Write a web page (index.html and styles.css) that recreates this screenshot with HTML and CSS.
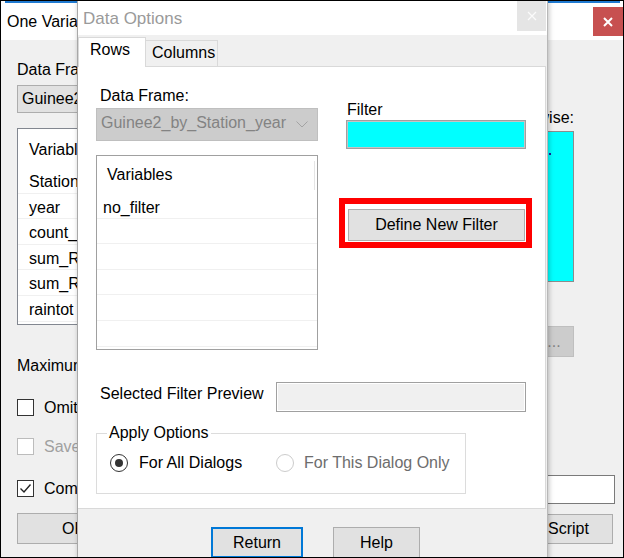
FILE: index.html
```html
<!DOCTYPE html>
<html>
<head>
<meta charset="utf-8">
<title>Data Options</title>
<link rel="stylesheet" href="styles.css">
</head>
<body>
<div class="screen">
  <div class="bgwin">
    <div class="bg-title">
      <span class="bg-title-text">One Varia</span>
      <span class="bg-close"><svg width="10" height="10" viewBox="0 0 10 10"><path d="M1 1L9 9M9 1L1 9" stroke="#fff" stroke-width="2"/></svg></span>
    </div>
    <div class="bg-client">
      <div class="bg-left">
        <div class="lbl first">Data Fra</div>
        <div class="bg-combo">Guinee2</div>
        <div class="bg-list">
          <div class="list-head">Variabl</div>
          <div class="row">Station</div>
          <div class="row">year</div>
          <div class="row">count_</div>
          <div class="row">sum_R</div>
          <div class="row">sum_R</div>
          <div class="row">raintot</div>
        </div>
        <div class="lbl max-lbl">Maximum</div>
        <div class="chk-row omit"><span class="chk"></span><span>Omit</span></div>
        <div class="chk-row save disabled"><span class="chk dis"></span><span>Save</span></div>
        <div class="chk-row comm"><span class="chk"><svg width="15" height="15" viewBox="0 0 15 15"><path d="M2.5 7.5L6 11L12.5 3.5" fill="none" stroke="#222" stroke-width="1.4"/></svg></span><span>Comm</span></div>
        <div class="btn bg-ok">OK</div>
      </div>
      <div class="bg-right">
        <div class="rlbl"><span>wise:</span></div>
        <div class="cyan-list"><span class="dot"></span></div>
        <div class="btn dis-btn">...</div>
        <div class="textbox"></div>
        <div class="btn script-btn">Script</div>
      </div>
    </div>
  </div>

  <div class="dlg">
    <div class="dlg-title">
      <span class="dlg-title-text">Data Options</span>
      <span class="dlg-close"><svg width="10" height="10" viewBox="0 0 10 10"><path d="M1 1L9 9M9 1L1 9" stroke="#fbfbfb" stroke-width="1.3"/></svg></span>
    </div>
    <div class="tabs">
      <div class="tab sel">Rows</div>
      <div class="tab">Columns</div>
    </div>
    <div class="page">
      <div class="page-top">
        <div class="pcol-left">
          <div class="df-lbl">Data Frame:</div>
          <div class="combo-dis">
            <span>Guinee2_by_Station_year</span>
            <svg width="12" height="7" viewBox="0 0 12 7"><path d="M0.5 0.5L6 6L11.5 0.5" fill="none" stroke="#a3a3a3" stroke-width="1"/></svg>
          </div>
          <div class="dlg-list">
            <div class="dlist-head">Variables</div>
            <div class="drow">no_filter</div>
            <div class="drow"></div>
            <div class="drow"></div>
            <div class="drow"></div>
            <div class="drow"></div>
            <div class="drow"></div>
          </div>
        </div>
        <div class="pcol-right">
          <div class="filter-lbl">Filter</div>
          <div class="filter-box"></div>
          <div class="redbox">
            <div class="btn dnf-btn">Define New Filter</div>
          </div>
        </div>
      </div>
      <div class="preview-row">
        <span class="preview-lbl">Selected Filter Preview</span>
        <div class="preview-box"></div>
      </div>
      <fieldset class="apply">
        <legend>Apply Options</legend>
        <div class="radio-row">
          <label class="ropt first"><span class="radio on"></span><span>For All Dialogs</span></label>
          <label class="ropt dis"><span class="radio off"></span><span>For This Dialog Only</span></label>
        </div>
      </fieldset>
    </div>
    <div class="footer">
      <div class="btn ret">Return</div>
      <div class="btn help">Help</div>
    </div>
  </div>
</div>
</body>
</html>
```

FILE: styles.css
```css
* { box-sizing: border-box; }
html, body { margin: 0; padding: 0; }
body {
  font-family: "Liberation Sans", Arial, sans-serif;
  font-size: 16px;
  line-height: 20px;
  color: #000;
  background: #fff;
}
.screen {
  position: relative;
  width: 624px;
  height: 558px;
  border: 1px solid #000;
  overflow: hidden;
  background: #f0f0f0;
}

/* ---------- background window (partly hidden behind the dialog) ---------- */
.bgwin {
  position: absolute;
  left: 0;
  top: 0;
  width: 622px;
  height: 556px;
  display: flex;
  flex-direction: column;
  background: #f0f0f0;
}
.bg-title {
  position: relative;
  height: 39px;
  flex: none;
  background: #fff;
  display: flex;
  align-items: flex-start;
  padding-left: 6px;
}
.bg-title::before {
  content: "";
  position: absolute;
  left: 4px;
  right: 3px;
  top: 0;
  height: 2px;
  background: #1f7ad1;
}
.bg-title-text {
  margin-top: 11px;
  width: 70px;
  overflow: hidden;
  white-space: nowrap;
}
.bg-close {
  margin-left: auto;
  margin-top: 6px;
  width: 30px;
  height: 29px;
  background: #c75050;
  display: flex;
  align-items: center;
  justify-content: center;
}
.bg-client {
  flex: 1;
  display: flex;
  justify-content: space-between;
}
.bg-left {
  width: 76px;
  padding-left: 16px;
  overflow: hidden;
}
.lbl { white-space: nowrap; }
.lbl.first { margin-top: 20px; }
.bg-combo {
  margin-top: 5px;
  width: 200px;
  height: 28px;
  background: #e1e1e1;
  border: 1px solid #adadad;
  padding-left: 4px;
  line-height: 26px;
  white-space: nowrap;
  overflow: hidden;
}
.bg-list {
  margin-top: 15px;
  width: 200px;
  height: 197px;
  background: #fff;
  border: 1px solid #828790;
  overflow: hidden;
}
.list-head { height: 39px; padding: 11px 0 0 11px; }
.bg-list .row {
  height: 25.6px;
  padding: 4px 0 0 11px;
  border-bottom: 1px solid #f0f0f0;
  white-space: nowrap;
}
.max-lbl { margin-top: 31px; }
.chk-row {
  display: flex;
  align-items: center;
  gap: 10px;
  height: 17px;
  line-height: 17px;
  white-space: nowrap;
}
.chk {
  width: 17px;
  height: 17px;
  flex: none;
  background: #fff;
  border: 1px solid #333;
  display: flex;
  align-items: center;
  justify-content: center;
}
.chk.dis { border-color: #bcbcbc; }
.chk-row.disabled { color: #a0a0a0; }
.omit { margin-top: 23px; }
.save { margin-top: 22px; }
.comm { margin-top: 25px; }
.btn {
  background: #e1e1e1;
  border: 1px solid #adadad;
  display: flex;
  align-items: center;
  justify-content: center;
  white-space: nowrap;
  flex: none;
}
.bg-ok {
  margin-top: 16px;
  width: 113px;
  height: 31px;
  justify-content: flex-start;
  padding-left: 44px;
}

.bg-right {
  width: 68px;
  margin-right: 8px;
  overflow: hidden;
}
.rlbl {
  margin-top: 68px;
  margin-left: -72px;
  width: 99px;
  display: flex;
  justify-content: flex-end;
  white-space: nowrap;
}
.rlbl span { flex: none; }
.cyan-list {
  margin-top: 3px;
  margin-left: -72px;
  width: 99px;
  height: 151px;
  background: #00ffff;
  border: 1px solid #8c8c8c;
}
.dot {
  display: block;
  width: 2px;
  height: 2px;
  margin: 21px 0 0 73px;
  background: #1a1aa0;
}
.dis-btn {
  margin-top: 44px;
  margin-left: -13px;
  width: 40px;
  height: 31px;
  background: #cccccc;
  border-color: #bfbfbf;
  color: #838383;
}
.textbox {
  margin-top: 118px;
  margin-left: -72px;
  width: 140px;
  height: 29px;
  background: #fff;
  border: 1px solid #7a7a7a;
}
.script-btn {
  margin-top: 10px;
  margin-left: -48px;
  width: 114px;
  height: 30px;
  justify-content: flex-start;
  padding-left: 48px;
}

/* ---------- Data Options dialog ---------- */
.dlg {
  position: absolute;
  left: 76px;
  top: 0;
  width: 471px;
  height: 560px;
  background: #f0f0f0;
  border-left: 1px solid #a8a8a8;
  border-right: 1px solid #b8b8b8;
  box-shadow: 1px 0 5px rgba(0, 0, 0, 0.25);
  display: flex;
  flex-direction: column;
}
.dlg-title {
  height: 34px;
  flex: none;
  background: #fff;
  display: flex;
  align-items: flex-start;
  padding-left: 5px;
  color: #9a9a9a;
  font-size: 17px;
}
.dlg-title-text { margin-top: 8px; }
.dlg-close {
  margin-left: auto;
  margin-right: 1px;
  width: 29px;
  height: 30px;
  background: #e5e5e5;
  display: flex;
  align-items: center;
  justify-content: center;
}
.tabs {
  height: 31px;
  flex: none;
  display: flex;
  align-items: flex-end;
  position: relative;
  z-index: 1;
}
.tab {
  height: 26px;
  width: 72px;
  padding: 2px 0 0 6px;
  background: #f0f0f0;
  border: 1px solid #d9d9d9;
  border-left: none;
  border-bottom: none;
}
.tab.sel {
  width: 68px;
  height: 30px;
  margin-bottom: -1px;
  padding: 2px 0 0 11px;
  background: #fff;
  border-left: 1px solid #d9d9d9;
}
.page {
  height: 443px;
  flex: none;
  margin-right: 1px;
  background: #fff;
  border-top: 1px solid #d9d9d9;
  border-right: 1px solid #d9d9d9;
  border-bottom: 1px solid #d9d9d9;
}
.page-top { display: flex; padding-left: 18px; }
.pcol-left { width: 222px; flex: none; }
.df-lbl { margin-top: 19px; padding-left: 4px; }
.combo-dis {
  margin-top: 2px;
  height: 33px;
  background: #cccccc;
  border: 1px solid #bfbfbf;
  color: #838383;
  display: flex;
  align-items: center;
  justify-content: space-between;
  padding: 0 9px 3px 4px;
  white-space: nowrap;
}
.combo-dis svg { margin-top: 2px; }
.dlg-list {
  margin-top: 14px;
  height: 195px;
  background: #fff;
  border: 1px solid #a0a0a0;
  overflow: hidden;
}
.dlist-head {
  position: relative;
  height: 37px;
  padding: 9px 0 0 10px;
}
.dlist-head::after {
  content: "";
  position: absolute;
  right: 2px;
  top: 5px;
  bottom: 3px;
  width: 1px;
  background: #e5e5e5;
}
.drow {
  height: 25.6px;
  padding: 5px 0 0 6px;
  border-bottom: 1px solid #f0f0f0;
}
.pcol-right { margin-left: 28px; width: 180px; flex: none; }
.filter-lbl { margin-top: 33px; padding-left: 1px; }
.filter-box {
  height: 29px;
  background: #00ffff;
  border: 1px solid #a0a0a0;
  box-shadow: inset 0 0 0 1px #c4c4c4;
}
.redbox {
  margin-top: 49px;
  margin-left: -7px;
  width: 193px;
  height: 50px;
  border: 6px solid #ff0000;
  padding: 5px 1px 1px 3px;
  background: #fff;
}
.dnf-btn { height: 32px; width: 100%; }
.preview-row {
  margin-top: 32px;
  display: grid;
  grid-template-columns: 176px 250px;
  align-items: center;
  padding-left: 22px;
  white-space: nowrap;
}
.preview-lbl { padding-bottom: 7px; }
.preview-box {
  height: 30px;
  background: #f0f0f0;
  border: 1px solid #a0a0a0;
  box-shadow: inset 0 0 0 1px #fff;
}
.apply {
  margin: 11px 0 0 18px;
  width: 370px;
  min-width: 0;
  padding: 10px 0 20px 13px;
  border: 1px solid #dcdcdc;
}
.apply legend {
  margin-left: -3px;
  padding: 0 2px;
  line-height: 20px;
}
.radio-row { display: flex; align-items: center; height: 20px; white-space: nowrap; }
.ropt { display: flex; align-items: center; gap: 11px; }
.ropt.first { width: 166px; }
.ropt.dis { gap: 10px; color: #6d6d6d; }
.radio {
  width: 18px;
  height: 18px;
  flex: none;
  border-radius: 50%;
  border: 1px solid #333;
  background: #fff;
  display: flex;
  align-items: center;
  justify-content: center;
}
.radio.on::after {
  content: "";
  width: 8px;
  height: 8px;
  border-radius: 50%;
  background: #333;
}
.radio.off { border-color: #cccccc; }
.footer {
  flex: none;
  display: flex;
  padding: 18px 0 0 133px;
}
.ret { width: 92px; height: 31px; border: 2px solid #0078d7; }
.help { margin-left: 30px; width: 87px; height: 31px; }
```
